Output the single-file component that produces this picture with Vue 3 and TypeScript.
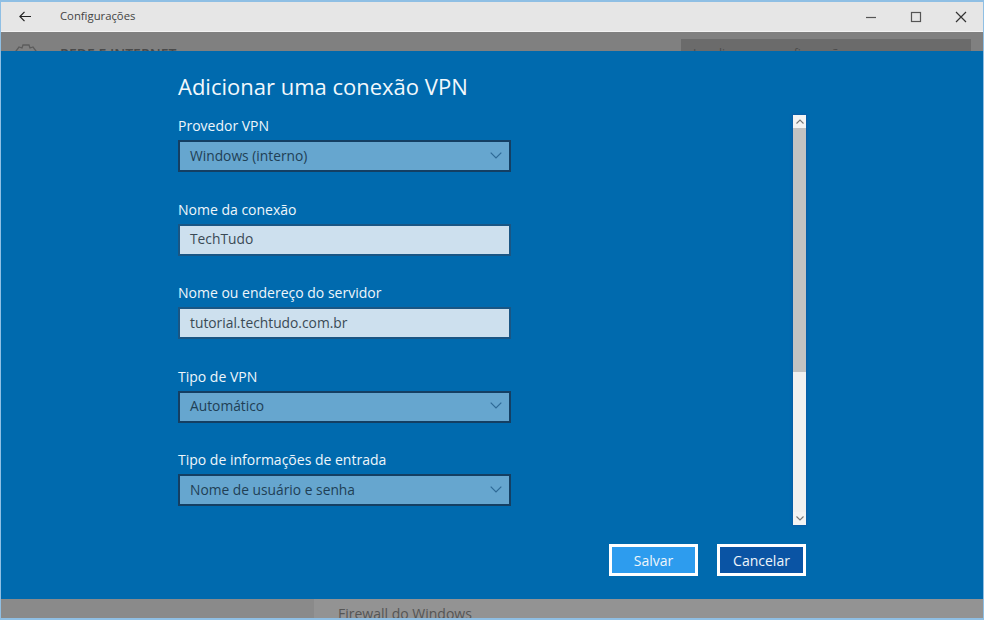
<script setup lang="ts">
interface Field { label: string; value: string; kind: 'select' | 'input' }
const fields: Field[] = [
  { label: 'Provedor VPN', value: 'Windows (interno)', kind: 'select' },
  { label: 'Nome da conexão', value: 'TechTudo', kind: 'input' },
  { label: 'Nome ou endereço do servidor', value: 'tutorial.techtudo.com.br', kind: 'input' },
  { label: 'Tipo de VPN', value: 'Automático', kind: 'select' },
  { label: 'Tipo de informações de entrada', value: 'Nome de usuário e senha', kind: 'select' },
]
</script>

<template>
  <div class="window">
    <header class="titlebar">
      <svg class="back" width="12" height="11" viewBox="0 0 12 11" fill="none" stroke="#222" stroke-width="1.2">
        <path d="M5.500 .8.900 5.500l4.600 4.700M.9 5.500H12" />
      </svg>
      <span class="app-title">Configurações</span>
      <div class="controls">
        <svg width="12" height="12" viewBox="0 0 12 12" fill="none" stroke="#555" stroke-width="1.2"><path d="M1 6.500h10" /></svg>
        <svg width="12" height="12" viewBox="0 0 12 12" fill="none" stroke="#555" stroke-width="1.2"><rect x="1.500" y="1.500" width="9" height="9" /></svg>
        <svg width="12" height="12" viewBox="0 0 12 12" fill="none" stroke="#333" stroke-width="1.2"><path d="M1 1l10 10M11 1 1 11" /></svg>
      </div>
    </header>

    <div class="content">
      <div class="bg-top">
        <svg class="gear" width="24" height="24" viewBox="0 0 24 24" fill="none" stroke="#5c5c5c" stroke-width="1.3">
          <path d="M9 2h6l1 3 3-1 3 4-2 3v2l2 3-3 4-3-1-1 3H9l-1-3-3 1-3-4 2-3v-2L2 8l3-4 3 1z" />
        </svg>
        <span class="section">REDE E INTERNET</span>
        <div class="search">Localizar uma configuração</div>
      </div>
      <div class="bg-bottom">
        <div class="bg-left"></div>
        <div class="bg-right"><span class="firewall">Firewall do Windows</span></div>
      </div>

      <section class="dialog">
        <div class="form-col">
          <h1 class="heading">Adicionar uma conexão VPN</h1>
          <div class="fields">
            <div v-for="f in fields" :key="f.label" class="field">
              <label class="label">{{ f.label }}</label>
              <div :class="['control', f.kind]">
                <span>{{ f.value }}</span>
                <svg v-if="f.kind === 'select'" class="chev" width="12" height="7" viewBox="0 0 12 7" fill="none" stroke="#2f6a96" stroke-width="1.2">
                  <path d="M.7.7 6 6l5.300-5.300" />
                </svg>
              </div>
            </div>
          </div>
        </div>

        <div class="side">
          <div class="scrollbar">
            <div class="sb-btn">
              <svg width="8" height="5" viewBox="0 0 8 5" fill="none" stroke="#777" stroke-width="1.1"><path d="M.5 4.500 4 1l3.500 3.500" /></svg>
            </div>
            <div class="thumb"></div>
            <div class="track"></div>
            <div class="sb-btn">
              <svg width="8" height="5" viewBox="0 0 8 5" fill="none" stroke="#777" stroke-width="1.1"><path d="M.5.5 4 4 7.500.5" /></svg>
            </div>
          </div>
        </div>

        <div class="actions">
          <button class="btn primary">Salvar</button>
          <button class="btn secondary">Cancelar</button>
        </div>
      </section>
    </div>
  </div>
</template>

<style>
html, body { margin: 0; padding: 0; }
</style>

<style scoped>
.window {
  width: 984px;
  height: 620px;
  box-sizing: border-box;
  display: flex;
  flex-direction: column;
  border: 1px solid #8fbfe4;
  border-top-width: 2px;
  border-bottom-width: 2px;
  overflow: hidden;
  font-family: "Open Sans", "Noto Sans", sans-serif;
  background: #808080;
}
.titlebar {
  height: 29px;
  flex: none;
  display: flex;
  align-items: center;
  background: #e6e6e6;
  border-bottom: 1px solid #f2f2f2;
  padding-left: 18px;
}
.back { flex: none; }
.app-title {
  margin-left: 29px;
  padding-bottom: 2px;
  font-size: 11.3px;
  color: #444;
}
.controls {
  margin-left: auto;
  display: flex;
  gap: 33px;
  padding-right: 16px;
}
.content {
  flex: 1;
  position: relative;
  display: flex;
  flex-direction: column;
  justify-content: space-between;
  overflow: hidden;
}
.bg-top {
  height: 60px;
  position: relative;
  background: #808080;
}
.gear { position: absolute; left: 13px; top: 11px; }
.section {
  position: absolute;
  left: 59px;
  top: 12px;
  font-size: 14px;
  font-weight: 600;
  color: #4a4a4a;
}
.search {
  position: absolute;
  left: 680px;
  top: 7px;
  width: 290px;
  height: 40px;
  padding: 6px 12px;
  box-sizing: border-box;
  background: #6b6b6b;
  font-size: 12px;
  color: #4c4c4c;
}
.bg-bottom {
  height: 19px;
  display: flex;
}
.bg-left { width: 313px; background: #8a8a8a; }
.bg-right {
  flex: 1;
  background: #939393;
  padding-left: 24px;
  overflow: hidden;
}
.firewall {
  display: block;
  margin-top: 6px;
  font-size: 14px;
  line-height: 18px;
  color: #555;
}
.dialog {
  position: absolute;
  left: 0;
  right: 0;
  top: 19px;
  height: 548px;
  background: #006aae;
  display: grid;
  grid-template-columns: 792px 13px 1fr;
  grid-template-rows: 474px 1fr;
}
.form-col { padding: 20px 0 0 177px; }
.heading {
  margin: 0;
  font-size: 22px;
  line-height: 31px;
  font-weight: 400;
  color: #f2f8fc;
}
.fields {
  margin-top: 10px;
  display: flex;
  flex-direction: column;
  gap: 23.5px;
}
.field { width: 333px; }
.label {
  display: block;
  height: 28px;
  line-height: 28px;
  font-size: 14px;
  color: #eef6fb;
}
.control {
  height: 32px;
  box-sizing: border-box;
  border: 2px solid #143f63;
  padding: 0 7px 2px 10px;
  display: flex;
  align-items: center;
  justify-content: space-between;
  font-size: 13.8px;
  color: #1f3f55;
}
.select { background: #66a6cf; }
.input {
  background: #cde0ee;
  border-color: #1a5684;
  color: #3a4a55;
}
.side { padding-top: 64px; }
.scrollbar {
  height: 410px;
  display: flex;
  flex-direction: column;
  background: #f0f0f0;
  box-shadow: 0 0 2px 1px #0a5aa5;
}
.sb-btn {
  height: 13px;
  flex: none;
  display: flex;
  align-items: center;
  justify-content: center;
  background: #f3f3f3;
}
.thumb { height: 244px; background: #c2c2c2; flex: none; }
.track { flex: 1; }
.actions {
  grid-column: 1 / 3;
  display: flex;
  justify-content: flex-end;
  gap: 19px;
  padding-top: 19px;
}
.btn {
  width: 89px;
  height: 32px;
  box-sizing: border-box;
  border: 3px solid #fff;
  font: inherit;
  font-size: 14px;
  color: #eef6fb;
  padding: 0;
}
.primary { background: #2d9cee; }
.secondary { background: #0a54a4; }
</style>
